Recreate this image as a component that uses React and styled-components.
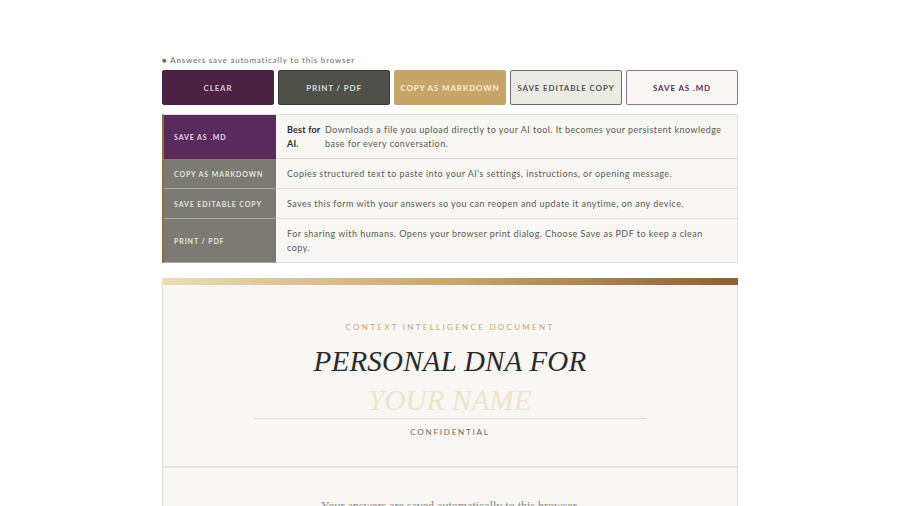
import React from "react";
import styled, { createGlobalStyle } from "styled-components";

const Global = createGlobalStyle`
  html, body { margin: 0; padding: 0; background: #ffffff; }
  body { font-family: "Lato", "Noto Sans", sans-serif; -webkit-font-smoothing: antialiased; }
  * { box-sizing: border-box; }
`;

const Page = styled.div`
  width: 576px;
  margin: 0 auto;
  padding-top: 55px;
`;

const Note = styled.div`
  font-size: 8px;
  line-height: 11px;
  letter-spacing: 0.8px;
  color: #6b6b66;
  margin-bottom: 4px;
`;

const Toolbar = styled.div`
  display: flex;
  gap: 4px;
`;

const variants = {
  clear: { bg: "#4b2244", fg: "#dcc6d6", border: "#4b2244" },
  print: { bg: "#50504b", fg: "#dcdcd4", border: "#3a3a36" },
  copy: { bg: "#c7a569", fg: "#f6ead3", border: "#c7a569" },
  editable: { bg: "#ebeae5", fg: "#55554f", border: "#6a6a64" },
  md: { bg: "#f8f6f3", fg: "#5b2d56", border: "#9a7393" },
};

const Button = styled.button`
  flex: 1 1 0;
  height: 35px;
  border-radius: 2px;
  border: 1px solid ${(p) => variants[p.$v].border};
  background: ${(p) => variants[p.$v].bg};
  color: ${(p) => variants[p.$v].fg};
  font-family: "Lato", "Noto Sans", sans-serif;
  font-size: 8px;
  font-weight: 700;
  letter-spacing: 0.85px;
  text-transform: uppercase;
  padding: 0;
  cursor: pointer;
`;

const Table = styled.div`
  margin-top: 9px;
  border-left: 2px solid #946c3c;
  border-top: 1px solid #e4e1da;
  border-right: 1px solid #e4e1da;
  display: flex;
  flex-direction: column;
`;

const Row = styled.div`
  display: flex;
  min-height: ${(p) => p.$h}px;
  border-bottom: 1px solid #e2dfd8;
`;

const Label = styled.div`
  width: 112px;
  flex-shrink: 0;
  display: flex;
  align-items: center;
  padding-left: 10px;
  background: ${(p) => (p.$primary ? "#5b2a5d" : "#7b7a73")};
  color: ${(p) => (p.$primary ? "#e6d6e4" : "#e4e3dc")};
  font-size: 7px;
  font-weight: 700;
  letter-spacing: 0.9px;
  text-transform: uppercase;
  margin-bottom: -1px;
  border-bottom: 1px solid ${(p) => (p.$primary ? "#5b2a5d" : "#a9a8a0")};
`;

const Desc = styled.div`
  flex: 1;
  display: flex;
  align-items: center;
  background: #f7f6f2;
  padding: 0 12px 0 11px;
  font-size: 9px;
  line-height: 14px;
  color: #5a5a54;
  letter-spacing: 0.45px;
`;

const Best = styled.strong`
  width: 36px;
  flex-shrink: 0;
  margin-right: 2px;
  color: #2b2b28;
  font-weight: 700;
  letter-spacing: 0.2px;
`;

const DescText = styled.span`
  flex: 1;
`;

const Card = styled.div`
  margin-top: 15px;
  background: #f8f6f2;
  border-left: 1px solid #e4e0d7;
  border-right: 1px solid #e4e0d7;
`;

const GoldBar = styled.div`
  height: 7px;
  background: linear-gradient(90deg, #ecdcb6 0%, #c9a66b 50%, #8d5f30 100%);
  margin: 0 -1px;
`;

const Header = styled.div`
  display: flex;
  flex-direction: column;
  align-items: center;
  padding: 37px 90px 29px;
  border-bottom: 2px solid #e8e5de;
`;

const Eyebrow = styled.div`
  font-size: 8px;
  line-height: 10px;
  letter-spacing: 2.3px;
  color: #c9a672;
  text-transform: uppercase;
`;

const Title = styled.h1`
  margin: 11px 0 0;
  font-family: "Liberation Serif", "DejaVu Serif", serif;
  font-style: italic;
  font-weight: 400;
  font-size: 29px;
  line-height: 36px;
  color: #2a2a2a;
  letter-spacing: 0.2px;
`;

const Name = styled.div`
  font-family: "Liberation Serif", "DejaVu Serif", serif;
  font-style: italic;
  font-size: 29px;
  line-height: 36px;
  margin-top: 3px;
  color: #efe4cb;
  letter-spacing: 0.2px;
  width: 100%;
  text-align: center;
  border-bottom: 1px solid #e3e0d8;
`;

const Confidential = styled.div`
  margin-top: 8px;
  font-size: 8px;
  line-height: 10px;
  letter-spacing: 1.8px;
  color: #6a6a65;
  text-transform: uppercase;
`;

const Body = styled.div`
  padding: 31px 90px 0;
  text-align: center;
  font-family: "Liberation Serif", "DejaVu Serif", serif;
  font-size: 12px;
  line-height: 14px;
  color: #8a8a84;
`;

const rows = [
  { label: "Save as .md", primary: true, h: 44, best: true, text: "Downloads a file you upload directly to your AI tool. It becomes your persistent knowledge base for every conversation." },
  { label: "Copy as Markdown", h: 30, text: "Copies structured text to paste into your AI's settings, instructions, or opening message." },
  { label: "Save editable copy", h: 30, text: "Saves this form with your answers so you can reopen and update it anytime, on any device." },
  { label: "Print / PDF", h: 44, text: "For sharing with humans. Opens your browser print dialog. Choose Save as PDF to keep a clean copy." },
];

export default function App() {
  return (
    <>
      <Global />
      <Page>
        <Note>● Answers save automatically to this browser</Note>
        <Toolbar>
          <Button $v="clear">Clear</Button>
          <Button $v="print">Print / PDF</Button>
          <Button $v="copy">Copy as Markdown</Button>
          <Button $v="editable">Save editable copy</Button>
          <Button $v="md">Save as .md</Button>
        </Toolbar>
        <Table>
          {rows.map((r) => (
            <Row key={r.label} $h={r.h}>
              <Label $primary={r.primary}>{r.label}</Label>
              <Desc>
                {r.best && <Best>Best for AI.</Best>}
                <DescText>{r.text}</DescText>
              </Desc>
            </Row>
          ))}
        </Table>
        <Card>
          <GoldBar />
          <Header>
            <Eyebrow>Context Intelligence Document</Eyebrow>
            <Title>PERSONAL DNA FOR</Title>
            <Name>YOUR NAME</Name>
            <Confidential>Confidential</Confidential>
          </Header>
          <Body>Your answers are saved automatically to this browser.</Body>
        </Card>
      </Page>
    </>
  );
}
